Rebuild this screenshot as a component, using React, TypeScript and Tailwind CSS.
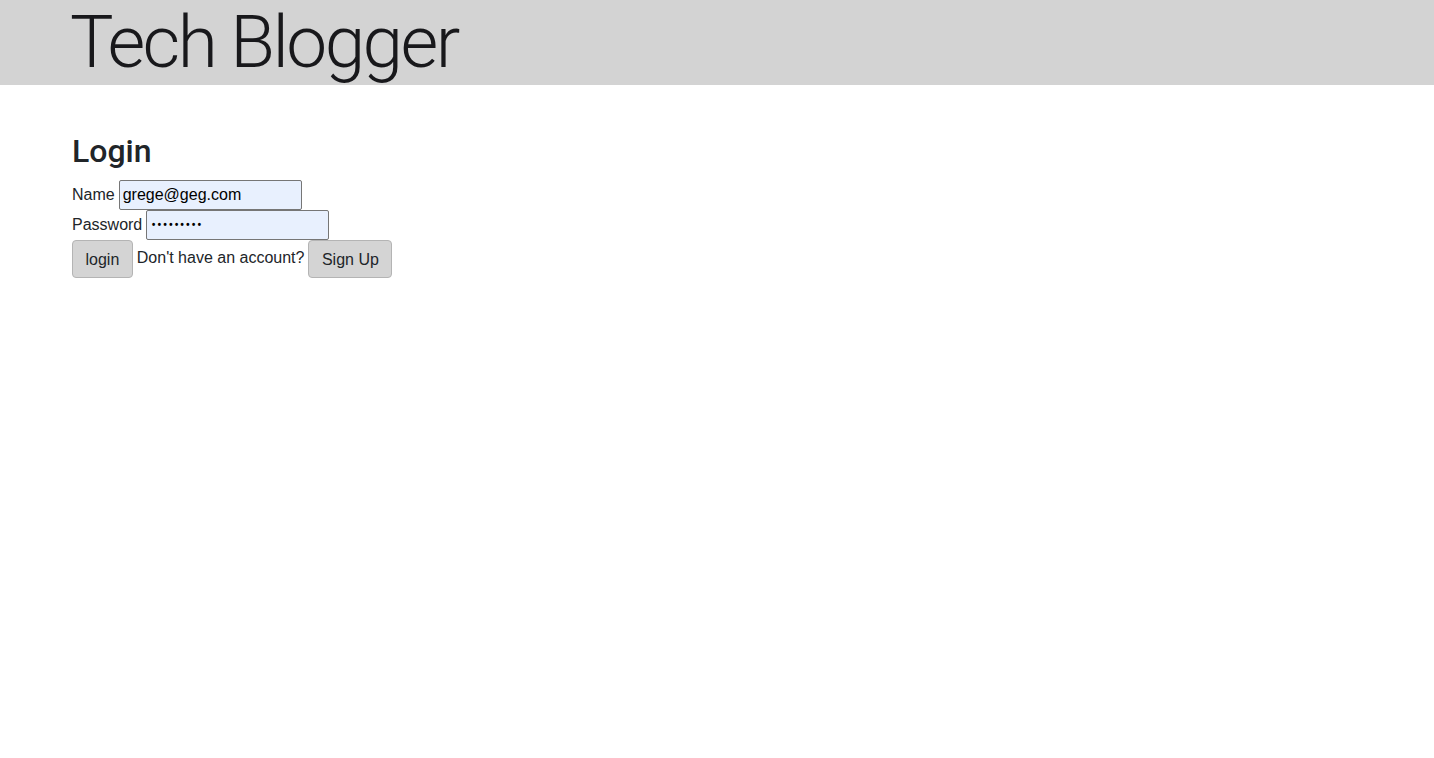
import React, { useState } from "react"

export default function App() {
  const [name, setName] = useState("grege@geg.com")
  const [password, setPassword] = useState("123456789")

  return (
    <div className="min-h-screen bg-white text-[#212529] font-['Liberation_Sans',Arial,sans-serif] text-base">
      {/* Header */}
      <header className="h-[85px] overflow-hidden bg-[#d3d3d3]">
        <div className="mx-auto max-w-[1320px] px-3">
          <h1 className="pl-[1px] text-[73px] leading-[85px] font-light tracking-[-2.6px] text-[#18181b] font-['Roboto',sans-serif]">
            Tech Blogger
          </h1>
        </div>
      </header>

      {/* Login form */}
      <main className="mx-auto max-w-[1320px] px-3 pt-[47px]">
        <h2 className="pl-[3px] text-[32px] leading-[38px] font-medium mb-[10px] font-['Roboto',sans-serif]">
          Login
        </h2>
        <form className="flex flex-col pl-[3px]" onSubmit={(e) => e.preventDefault()}>
          <div className="flex h-[30px] items-center gap-[4px]">
            <label htmlFor="name">Name</label>
            <input
              id="name"
              value={name}
              onChange={(e) => setName(e.target.value)}
              className="h-[30px] w-[183px] rounded-[2px] border border-[#767676] bg-[#e8f0fe] px-[3px] text-black outline-none"
            />
          </div>
          <div className="flex h-[30px] items-center gap-[4px]">
            <label htmlFor="password">Password</label>
            <input
              id="password"
              type="password"
              value={password}
              onChange={(e) => setPassword(e.target.value)}
              className="h-[30px] w-[183px] rounded-[2px] border border-[#767676] bg-[#e8f0fe] px-[4px] font-['Roboto',sans-serif] text-[14px] tracking-[1px] text-black outline-none"
            />
          </div>
          <div className="flex h-[38px] items-start gap-[4px]">
            <button
              type="submit"
              className="h-[38px] rounded-[4px] border border-[#b4b4b4] bg-[#d4d4d4] px-[12.5px] pt-[1px] text-[#212529]"
            >
              login
            </button>
            <span className="leading-[36px]">Don't have an account?</span>
            <button
              type="button"
              className="h-[38px] rounded-[4px] border border-[#b4b4b4] bg-[#d4d4d4] px-[12.5px] pt-[1px] text-[#212529]"
            >
              Sign Up
            </button>
          </div>
        </form>
      </main>
    </div>
  )
}
